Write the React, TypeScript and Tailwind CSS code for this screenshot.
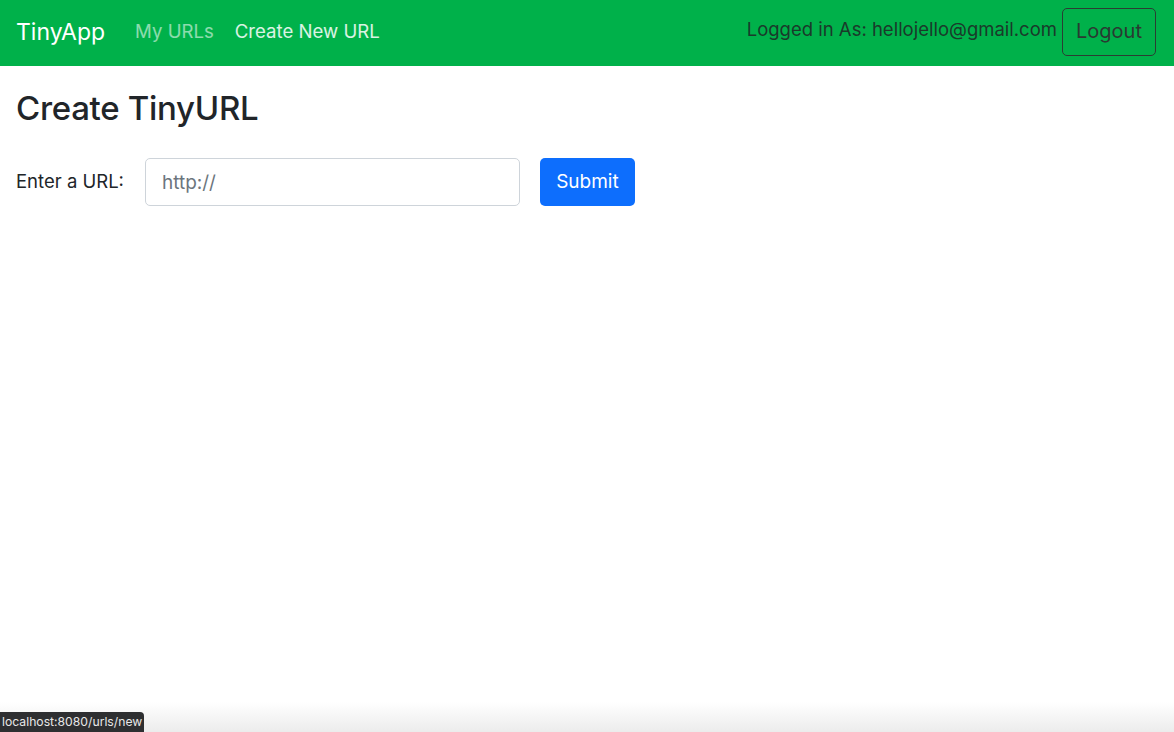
export default function App() {
  return (
    <div className="relative h-[732px] w-[1174px] overflow-hidden bg-white text-[#212529]" style={{ fontFamily: "Inter, 'Liberation Sans', sans-serif" }}>
      <nav className="flex h-[66px] items-center bg-[#00b14a] pl-4 pr-[18px]">
        <span className="-mt-[2px] text-[23px] text-white">TinyApp</span>
        <div className="-mt-[2px] ml-[30px] flex gap-[21px] text-[18.6px]">
          <span className="text-white/55">My URLs</span>
          <span className="text-white/85">Create New URL</span>
        </div>
        <div className="ml-auto flex items-center gap-[5px]">
          <span className="-mt-[6px] text-[18.5px] text-[#1a3a2a]">Logged in As: hellojello@gmail.com</span>
          <button className="-mt-[3px] h-[48px] w-[94px] rounded-[5px] border border-[#2b3d33] pb-[2px] text-[20px] text-[#2a3a32]">Logout</button>
        </div>
      </nav>
      <div className="px-4">
        <h2 className="mt-[22px] text-[33px] leading-[40px] font-medium tracking-[-0.3px]">Create TinyURL</h2>
        <div className="mt-[30px] flex items-center">
          <label className="text-[18.5px]">Enter a URL:</label>
          <input
            className="ml-[21px] h-[48px] w-[375px] rounded-[5px] border border-[#ced4da] px-4 text-[19px] placeholder-[#6c757d] outline-none"
            placeholder="http://"
          />
          <button className="ml-[20px] h-[48px] w-[95px] rounded-[5px] bg-[#0d6efd] text-[19px] text-white">Submit</button>
        </div>
      </div>
      <div className="absolute bottom-0 left-0 h-[30px] w-full bg-gradient-to-b from-white to-[#ececec]" />
      <div className="absolute bottom-0 left-0 rounded-tr-[4px] bg-[#2e2f31] px-[2px] py-[1px] text-[12.2px] text-[#e8e8e8]">localhost:8080/urls/new</div>
    </div>
  );
}
